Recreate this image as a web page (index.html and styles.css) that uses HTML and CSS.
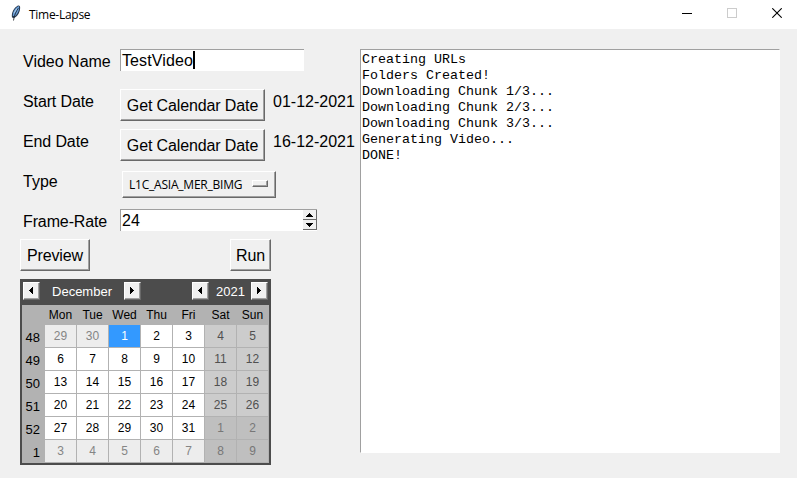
FILE: index.html
```html
<!DOCTYPE html>
<html lang="en">
<head>
<meta charset="utf-8">
<title>Time-Lapse</title>
<link rel="stylesheet" href="styles.css">
</head>
<body>
<header class="titlebar">
  <svg class="feather" width="12" height="18" viewBox="0 0 12 18"><path d="M2 13.500C1 9 4 3.500 8 1.500C10.500 .8 10.500 4 9.500 7.500C8.500 10.500 6.500 13 4 14Z" fill="#26384f"/><path d="M2.800 11.800C2.800 8 5.300 3.800 8.800 2.100C9.900 5 8 9.800 4.800 12.500Z" fill="#6ba0da"/><path d="M3.500 16.500C4 12 6 7.500 8.300 4" stroke="#10151c" stroke-width=".8" fill="none"/><path d="M4 9L7 4.500" stroke="#a6caed" stroke-width="1"/></svg>
  <h1 class="title">Time-Lapse</h1>
  <div class="controls">
    <svg width="10" height="10" shape-rendering="crispEdges"><path d="M0 5.500H10" stroke="#000"/></svg>
    <svg width="10" height="10" shape-rendering="crispEdges"><rect x=".5" y=".5" width="9" height="9" fill="none" stroke="#ccc"/></svg>
    <svg width="10" height="10"><path d="M.3 .3L9.700 9.700M9.700 .3L.3 9.700" stroke="#000" stroke-width="1.100"/></svg>
  </div>
</header>
<main class="content">
  <section class="panel">
    <div class="row"><span class="label name">Video Name</span><div class="entry"><span class="typed">TestVideo</span><i class="caret"></i></div></div>
    <div class="row"><span class="label start">Start Date</span><button class="button get">Get Calendar Date</button><span class="date">01-12-2021</span></div>
    <div class="row"><span class="label end">End Date</span><button class="button get">Get Calendar Date</button><span class="date">16-12-2021</span></div>
    <div class="row"><span class="label">Type</span><button class="button option"><span>L1C_ASIA_MER_BIMG</span><i class="indicator"></i></button></div>
    <div class="row"><span class="label rate">Frame-Rate</span><div class="entry spin"><span>24</span><div class="steps">
      <span class="step"><svg width="7" height="4" shape-rendering="crispEdges"><path d="M3 0h1v1h1v1h1v1h1v1H0V3h1V2h1V1h1z"/></svg></span>
      <span class="step"><svg width="7" height="4" shape-rendering="crispEdges"><path d="M0 0h7v1H6v1H5v1H4v1H3V3H2V2H1V1H0z"/></svg></span>
    </div></div></div>
    <div class="actions"><button class="button preview">Preview</button><button class="button run">Run</button></div>
    <div class="calendar">
      <div class="cal-head">
        <button class="nav"><svg width="4" height="7" shape-rendering="crispEdges"><path d="M4 0v7H3V6H2V5H1V4H0V3h1V2h1V1h1V0z"/></svg></button>
        <span class="month">December</span>
        <button class="nav"><svg width="4" height="7" shape-rendering="crispEdges"><path d="M0 0h1v1h1v1h1v1h1v1H3v1H2v1H1v1H0z"/></svg></button>
        <button class="nav year-prev"><svg width="4" height="7" shape-rendering="crispEdges"><path d="M4 0v7H3V6H2V5H1V4H0V3h1V2h1V1h1V0z"/></svg></button>
        <span class="year">2021</span>
        <button class="nav"><svg width="4" height="7" shape-rendering="crispEdges"><path d="M0 0h1v1h1v1h1v1h1v1H3v1H2v1H1v1H0z"/></svg></button>
      </div>
      <div class="days">
        <b></b><b>Mon</b><b>Tue</b><b>Wed</b><b>Thu</b><b>Fri</b><b>Sat</b><b>Sun</b>
        <em>48</em><span class="other">29</span><span class="other">30</span><span class="selected">1</span><span>2</span><span>3</span><span class="weekend">4</span><span class="weekend">5</span>
        <em>49</em><span>6</span><span>7</span><span>8</span><span>9</span><span>10</span><span class="weekend">11</span><span class="weekend">12</span>
        <em>50</em><span>13</span><span>14</span><span>15</span><span>16</span><span>17</span><span class="weekend">18</span><span class="weekend">19</span>
        <em>51</em><span>20</span><span>21</span><span>22</span><span>23</span><span>24</span><span class="weekend">25</span><span class="weekend">26</span>
        <em>52</em><span>27</span><span>28</span><span>29</span><span>30</span><span>31</span><span class="weekend-other">1</span><span class="weekend-other">2</span>
        <em>1</em><span class="other">3</span><span class="other">4</span><span class="other">5</span><span class="other">6</span><span class="other">7</span><span class="weekend-other">8</span><span class="weekend-other">9</span>
      </div>
    </div>
  </section>
  <pre class="log">Creating URLs
Folders Created!
Downloading Chunk 1/3...
Downloading Chunk 2/3...
Downloading Chunk 3/3...
Generating Video...
DONE!</pre>
</main>
</body>
</html>
```
FILE: styles.css
```css
* { box-sizing: border-box; }
body { margin: 0; width: 797px; height: 478px; overflow: hidden; background: #f0f0f0; color: #000; font: 16px/18px "Liberation Sans", sans-serif; }
svg { display: block; }
.titlebar { height: 29px; background: #fff; display: flex; align-items: center; padding: 0 15px 0 10px; }
.feather { margin-top: -3px; }
.title { margin: 0 0 0 7px; font: 12px/16px "Open Sans", sans-serif; letter-spacing: -.28px; }
.controls { margin: -3px 0 0 auto; display: flex; gap: 35px; }
.content { display: flex; padding-top: 20px; }
.panel { width: 340px; margin-left: 20px; }
.row { height: 40px; display: flex; align-items: flex-start; }
.label { width: 100px; padding: 4px 0 0 3px; white-space: nowrap; }
.start, .end, .rate { letter-spacing: -.12px; }
.entry { width: 184px; height: 22px; background: #fff; border-top: 1px solid #a0a0a0; border-left: 1px solid #a0a0a0; padding: 2px 0 0 1px; display: flex; }
.typed { letter-spacing: .1px; }
.caret { width: 2px; height: 18px; margin-top: -1px; background: #000; }
.button { margin: 0; background: #f0f0f0; color: #000; font: inherit; border: 1px solid; border-color: #fff #696969 #696969 #fff; box-shadow: inset -1px -1px #a0a0a0; padding: 2px 0 0; height: 32px; white-space: nowrap; letter-spacing: -.12px; }
.get { width: 145px; }
.date { padding: 4px 0 0 8px; }
.option { width: 154px; height: 27px; margin: 2px 0 0 2px; display: flex; align-items: center; font: 12px/16px "Open Sans", sans-serif; padding: 0 6px; justify-content: space-between; letter-spacing: -.22px; }
.indicator { width: 16px; height: 7px; border: 1px solid; border-color: #fff #696969 #696969 #fff; box-shadow: inset -1px -1px #a0a0a0; margin: -2px 1px 0 0; }
.spin { width: 197px; justify-content: space-between; padding: 0 0 1px 1px; line-height: 22px; }
.steps { width: 14px; }
.step { display: flex; height: 10px; align-items: center; justify-content: center; background: #f0f0f0; border-right: 1px solid #696969; border-bottom: 1px solid #696969; }
.actions { width: 251px; margin-top: -10px; display: flex; justify-content: space-between; }
.preview { width: 70px; }
.run { width: 41px; }
.calendar { width: 251px; height: 186px; margin-top: 8px; border: 2px solid #4c4c4c; background: #b2b2b2; font-size: 12px; }
.cal-head { height: 24px; background: #4c4c4c; color: #fff; display: flex; align-items: flex-start; padding: 1px 1px 0; }
.nav { width: 17px; height: 18px; padding: 0 2px 1px 0; display: flex; align-items: center; justify-content: center; background: #f0f0f0; border: 1px solid; border-color: #fff #696969 #696969 #fff; box-shadow: inset -1px -1px #a0a0a0; }
.month { width: 84px; text-align: center; font-size: 13px; line-height: 20px; }
.year-prev { margin-left: 51px; }
.year { width: 42px; text-align: center; font-size: 13px; line-height: 20px; padding-left: 1px; }
.days { display: grid; grid-template-columns: 23px repeat(7, 32px); grid-template-rows: 20px repeat(6, 23px); }
.days b { font-weight: 400; text-align: center; line-height: 20px; padding-right: 1px; }
.days em { font-style: normal; font-size: 13px; text-align: right; padding-right: 5px; line-height: 25px; height: 23px; }
.days span { background: #fff; border: 0 solid #b2b2b2; border-width: 0 1px 1px 0; text-align: center; line-height: 22px; }
.days .other { background: #ededed; color: #858585; }
.days .weekend { background: #ccc; color: #505050; }
.days .weekend-other { background: #bfbfbf; color: #777; }
.days .selected { background: #3399ff; color: #fff; }
.log { margin: 0; width: 420px; height: 404px; background: #fff; border: 1px solid; border-color: #a0a0a0 #fff #fff #a0a0a0; padding: 2px 1px 1px; font: 13.333px/16px "Liberation Mono", monospace; }
```
